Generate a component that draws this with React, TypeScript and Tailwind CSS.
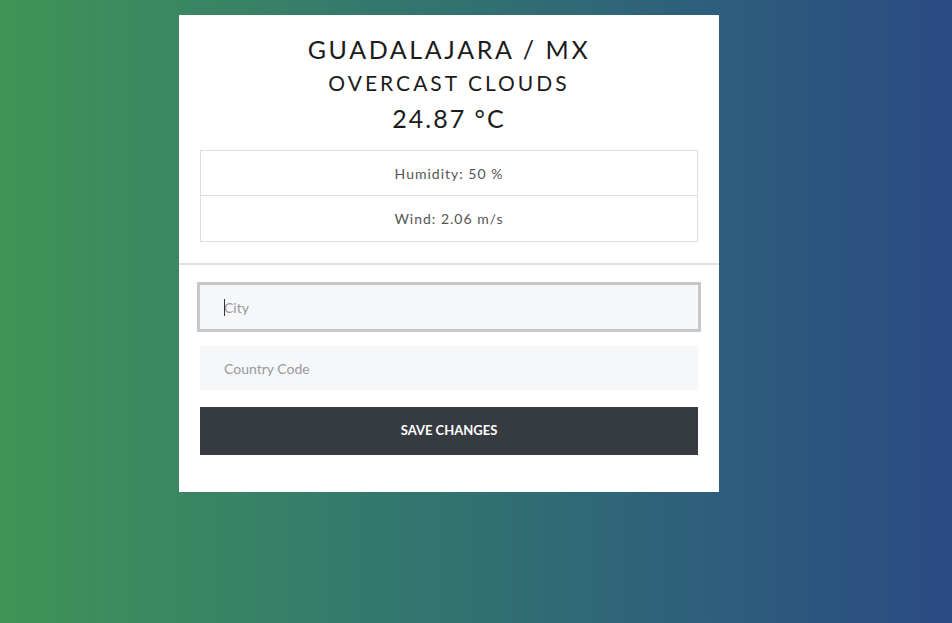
export default function App() {
  return (
    <div
      className="min-h-[623px] w-full bg-gradient-to-r from-[#409455] to-[#2b4a83] pl-[179px] pt-[15px]"
      style={{ fontFamily: "Lato, 'Open Sans', sans-serif" }}
    >
      <div className="w-[540px] bg-white">
        <div className="px-[21px] pt-[18px] pb-[21px] text-center">
          <h1 className="text-[25px] leading-[33px] tracking-[2.6px] text-[#1b1b1b]">
            GUADALAJARA / MX
          </h1>
          <h2 className="text-[21px] leading-[34px] tracking-[3px] text-[#1b1b1b]">
            OVERCAST CLOUDS
          </h2>
          <p className="mt-[1px] text-[25px] leading-[34px] tracking-[2px] text-[#1b1b1b]">
            24.87 °C
          </p>
          <ul className="mt-[15px] border border-[#dedede] text-[14px] tracking-[1px] text-[#555]">
            <li className="flex h-[45px] items-center justify-center border-b border-[#dedede]">
              Humidity: 50 %
            </li>
            <li className="flex h-[45px] items-center justify-center">Wind: 2.06 m/s</li>
          </ul>
        </div>
        <div className="h-[2px] bg-[#e2e2e2]" />
        <div className="flex flex-col gap-[17px] px-[21px] pt-[20px] pb-[37px]">
          <div className="relative">
            <input
              placeholder="City"
              className="h-[44px] w-full bg-[#f6f7f9] px-[24px] text-[14px] text-[#555] outline-[3px] outline-[#c8c8c8] outline-solid placeholder:text-[#999]"
            />
            <span className="absolute left-[24px] top-[14px] h-[17px] w-px bg-[#333]" />
          </div>
          <input
            placeholder="Country Code"
            className="h-[44px] w-full bg-[#f6f7f9] px-[24px] text-[14px] text-[#555] outline-none placeholder:text-[#999]"
          />
          <button className="h-[48px] w-full bg-[#363a41] text-[13px] font-bold text-white">
            SAVE CHANGES
          </button>
        </div>
      </div>
    </div>
  );
}
